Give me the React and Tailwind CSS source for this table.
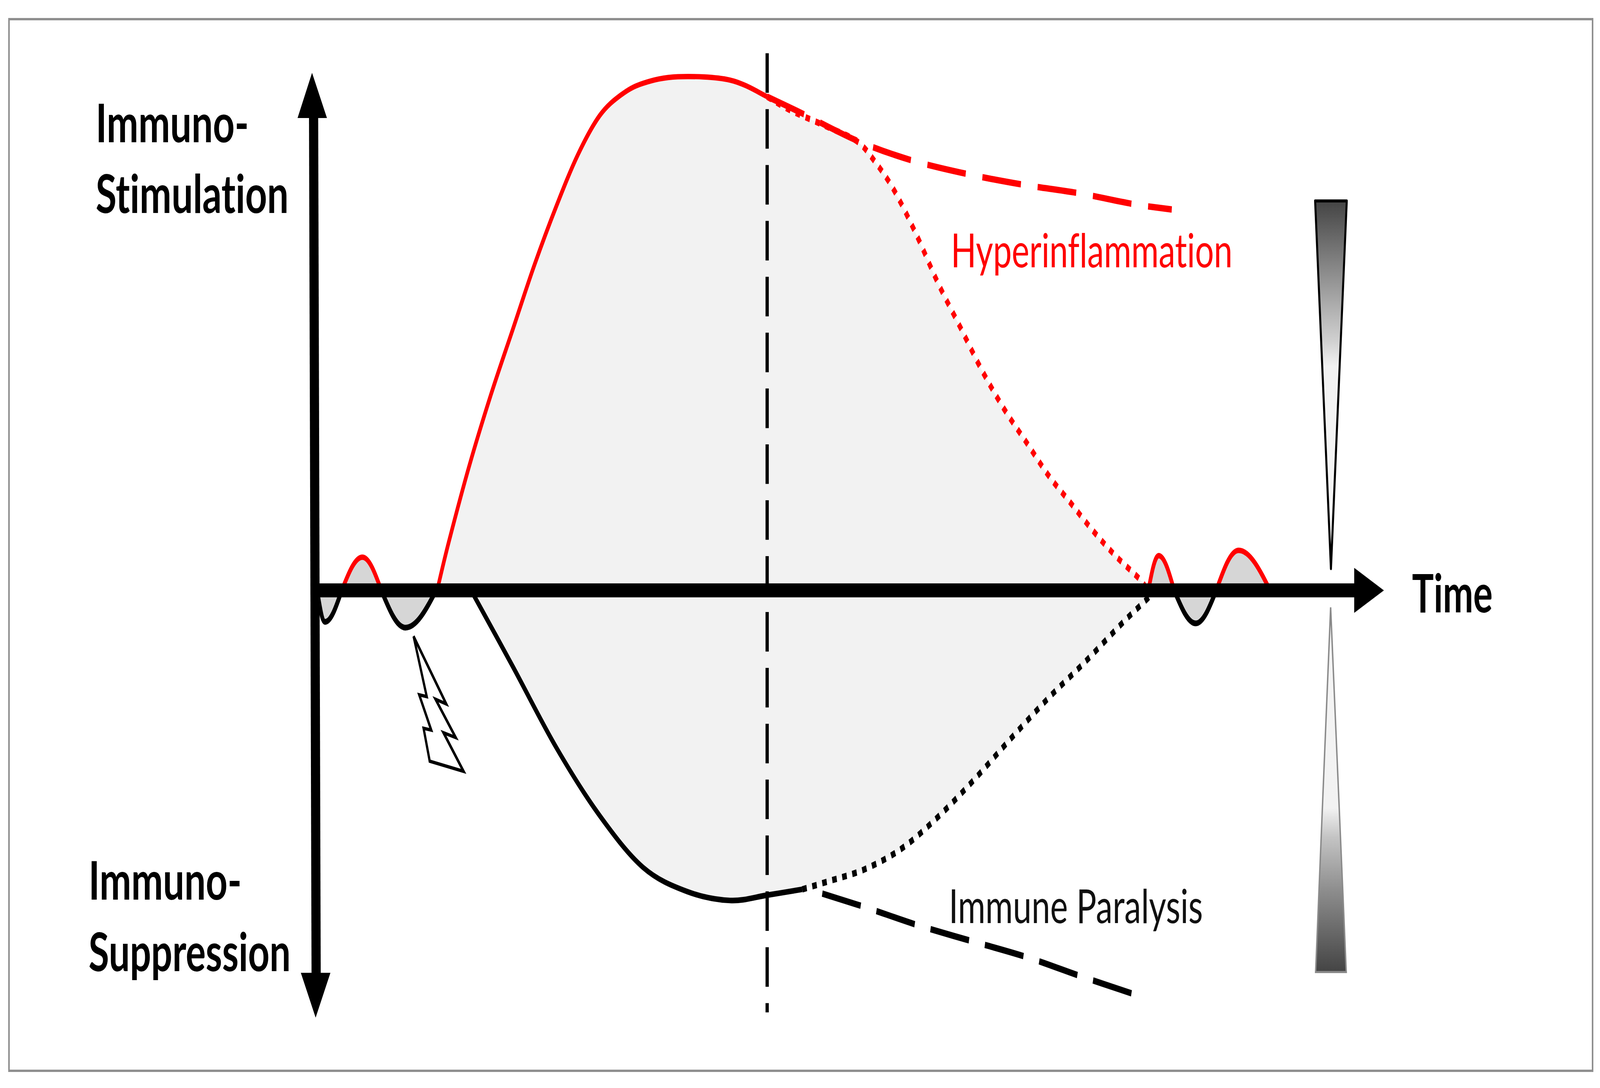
const K = 6108 / 1568;
const AX = 388;

// smooth path through points (catmull-rom -> cubic bezier)
const catmull = (pts) => {
  let d = "";
  for (let i = 0; i < pts.length - 1; i++) {
    const p0 = pts[i - 1] || pts[i];
    const p1 = pts[i];
    const p2 = pts[i + 1];
    const p3 = pts[i + 2] || p2;
    const c1x = p1[0] + (p2[0] - p0[0]) / 6;
    const c1y = p1[1] + (p2[1] - p0[1]) / 6;
    const c2x = p2[0] - (p3[0] - p1[0]) / 6;
    const c2y = p2[1] - (p3[1] - p1[1]) / 6;
    d += ` C${c1x.toFixed(2)},${c1y.toFixed(2)} ${c2x.toFixed(2)},${c2y.toFixed(2)} ${p2[0]},${p2[1]}`;
  }
  return d;
};
const curve = (pts) => `M${pts[0][0]},${pts[0][1]}` + catmull(pts);

// half sine wave sitting on the time axis
const hump = (x0, xp, yp, x1) => {
  const a = xp - x0;
  const b = x1 - xp;
  const h = yp - AX;
  return `M${x0},${AX} C${x0 + a * 0.326},${AX + h * 0.512} ${x0 + a * 0.638},${yp} ${xp},${yp} C${xp + b * 0.362},${yp} ${x1 - b * 0.326},${AX + h * 0.512} ${x1},${AX}`;
};

const redMain = [
  [428.5, 388], [440, 356], [460.1, 305.9], [481.4, 259], [502.7, 216.4], [524, 173.9],
  [545.3, 135.6], [566.6, 101.5], [587.8, 76], [608.5, 62.5], [630.4, 54.7], [664.5, 50.4],
  [715.6, 52.6], [752, 63.5],
];
const redDot = [
  [752, 63.5], [775.6, 72.7], [811.6, 83.5], [840.4, 93], [858.4, 106.9], [876.4, 125],
  [898, 153.8], [919.6, 186.2], [941.3, 215], [962.9, 243.8], [984.5, 269], [1006.1, 290.6],
  [1027.7, 312.3], [1049.3, 330.3], [1070.9, 348.3], [1092.5, 364.5], [1117.8, 381], [1124, 388],
];
const redDash = [
  [752, 63.5], [786.4, 74.5], [840.4, 92.5], [892.6, 105.1], [946.7, 114.1], [1002.5, 121.3],
  [1056.5, 126.8], [1110.5, 134], [1148.5, 137.6],
];
const blackSolid = [
  [462, 388], [502.7, 437.8], [545.3, 491], [587.8, 535.7], [630.4, 569.8], [673, 585.5],
  [715.6, 591.5], [752, 588], [786.4, 584.2],
];
const blackDot = [
  [786.4, 584.2], [811.6, 579], [847.6, 571], [883.6, 557.5], [919.6, 536.5], [955.7, 511.5],
  [991.7, 484.5], [1027.7, 458.5], [1063.7, 434.7], [1099.7, 409.5], [1125, 393], [1131, 388],
];
const blackDash = [
  [806, 587], [846.6, 595.6], [901.7, 608.2], [954, 618.5], [1006.7, 628.8], [1059, 641.2],
  [1114, 653.6],
];

const bigFill =
  curve(redMain) +
  catmull(redDot) +
  " L1131,388" +
  catmull([...blackDot].reverse()) +
  catmull([...blackSolid].reverse()) +
  " Z";

const redHumps = [
  hump(335, 355.3, 366, 374),
  hump(1125.5, 1135.7, 365, 1151),
  hump(1192, 1214, 361.5, 1245),
];
const blackHumps = [
  hump(311, 318.7, 408.5, 335),
  hump(374, 397.5, 412.3, 427.5),
  hump(1151, 1172, 409.5, 1192),
];

const bolt =
  "405.5,418 437.5,462.4 427,459.3 446.8,484.5 434.8,481.3 454.5,506.7 421.3,500 415.3,478.4 422.8,479.6 411,456.4 418.4,457.6";

const FONT = "Lato, 'Open Sans', sans-serif";

const Label = ({ x, y, len, bold, fill = "#000", size, children }) => (
  <text
    x={x}
    y={y}
    textLength={len}
    lengthAdjust="spacingAndGlyphs"
    fontFamily={FONT}
    fontWeight={bold ? 700 : 400}
    fontSize={size}
    fill={fill}
  >
    {children}
  </text>
);

export default function App() {
  return (
    <div className="w-screen h-screen overflow-hidden bg-white pl-[0.524vw] pt-[1.652vh]">
      <div className="w-[99.05vw] h-[96.875vh] border-x-[0.098vw] border-y-[0.216vh] border-[#8f8f8f] bg-white">
        <svg
          className="block w-full h-full [font-variant-ligatures:none]"
          viewBox={`${38 / K} ${52 / K} ${6038 / K} ${2685 / K}`}
          preserveAspectRatio="none"
        >
          <defs>
            <linearGradient id="upTri" x1="0" y1="0" x2="0" y2="1">
              <stop offset="0" stopColor="#444444" />
              <stop offset="0.23" stopColor="#999999" />
              <stop offset="0.38" stopColor="#d0d0d0" />
              <stop offset="0.45" stopColor="#f2f2f2" />
              <stop offset="1" stopColor="#f6f6f6" />
            </linearGradient>
            <linearGradient id="downTri" x1="0" y1="0" x2="0" y2="1">
              <stop offset="0" stopColor="#f5f5f5" />
              <stop offset="0.55" stopColor="#f2f2f2" />
              <stop offset="0.63" stopColor="#c4c4c4" />
              <stop offset="0.78" stopColor="#8c8c8c" />
              <stop offset="1" stopColor="#444444" />
            </linearGradient>
          </defs>

          {/* shaded areas */}
          <path d={bigFill} fill="#f2f2f2" />
          {[...redHumps, ...blackHumps].map((d, i) => (
            <path key={i} d={d + " Z"} fill="#d6d6d6" />
          ))}

          {/* time of intervention */}
          <line x1="752" y1="35" x2="752" y2="665" stroke="#000" strokeWidth="3.2" strokeDasharray="26 10.7" />

          {/* immune curves */}
          <path d={curve(redMain)} fill="none" stroke="#ff0000" strokeWidth="3.5" />
          <path d={curve(redDot)} fill="none" stroke="#ff0000" strokeWidth="4.2" strokeDasharray="4.5 5.5" />
          <path d={curve(redDash)} fill="none" stroke="#ff0000" strokeWidth="4.2" strokeDasharray="38 16.5" />
          <path d={curve(blackSolid)} fill="none" stroke="#000" strokeWidth="3.7" />
          <path d={curve(blackDot)} fill="none" stroke="#000" strokeWidth="4.2" strokeDasharray="4.5 5.5" />
          <path d={curve(blackDash)} fill="none" stroke="#000" strokeWidth="4.2" strokeDasharray="38.5 15.8" />
          {redHumps.map((d, i) => (
            <path key={i} d={d} fill="none" stroke="#ff0000" strokeWidth="3.6" />
          ))}
          {blackHumps.map((d, i) => (
            <path key={i} d={d} fill="none" stroke="#000" strokeWidth="3.8" />
          ))}

          {/* axes */}
          <line x1="307.5" y1="76" x2="310" y2="641" stroke="#000" strokeWidth="9" />
          <polygon points="306,47.8 291.8,77.5 320.6,77.5" fill="#000" />
          <polygon points="309.5,668.5 295,639 324,639" fill="#000" />
          <line x1="304.5" y1="387.8" x2="1329" y2="387.8" stroke="#000" strokeWidth="9.2" />
          <polygon points="1327.3,373 1356.4,387.8 1327.3,402.6" fill="#000" />

          {/* trigger */}
          <polygon points={bolt} fill="#fff" stroke="#000" strokeWidth="2.2" strokeLinejoin="miter" />

          {/* balance wedges */}
          <polygon points="1289,132 1320,132 1304.5,373.5" fill="url(#upTri)" stroke="#000" strokeWidth="2" strokeLinejoin="round" />
          <polygon points="1304.2,399 1289.5,638.5 1319.5,638.5" fill="url(#downTri)" stroke="#8a8a8a" strokeWidth="1.4" />

          {/* labels */}
          <Label x={94} y={93.5} len={150} bold size={35}>Immuno-</Label>
          <Label x={94} y={140} len={189} bold size={35}>Stimulation</Label>
          <Label x={87} y={591} len={150} bold size={35}>Immuno-</Label>
          <Label x={87} y={638} len={198} bold size={35}>Suppression</Label>
          <Label x={1384} y={402.3} len={79} bold size={35}>Time</Label>
          <Label x={932} y={175.5} len={276} fill="#ff0000" size={31}>Hyperinflammation</Label>
          <Label x={930} y={606.4} len={249} fill="#111" size={31}>Immune Paralysis</Label>
        </svg>
      </div>
    </div>
  );
}
